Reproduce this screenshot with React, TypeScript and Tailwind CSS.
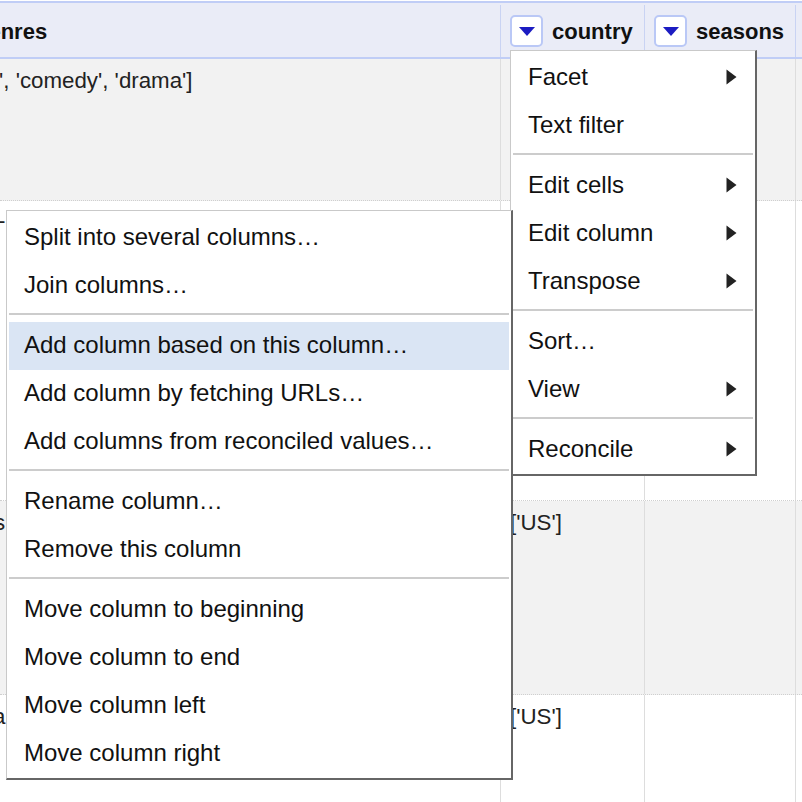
type Entry = { label: string; sub?: boolean; active?: boolean } | "sep";

const columnMenu: Entry[] = [
  { label: "Facet", sub: true },
  { label: "Text filter" },
  "sep",
  { label: "Edit cells", sub: true },
  { label: "Edit column", sub: true },
  { label: "Transpose", sub: true },
  "sep",
  { label: "Sort…" },
  { label: "View", sub: true },
  "sep",
  { label: "Reconcile", sub: true },
];

const editColumnMenu: Entry[] = [
  { label: "Split into several columns…" },
  { label: "Join columns…" },
  "sep",
  { label: "Add column based on this column…", active: true },
  { label: "Add column by fetching URLs…" },
  { label: "Add columns from reconciled values…" },
  "sep",
  { label: "Rename column…" },
  { label: "Remove this column" },
  "sep",
  { label: "Move column to beginning" },
  { label: "Move column to end" },
  { label: "Move column left" },
  { label: "Move column right" },
];

const rows = [
  { h: "h-[142px]", bg: "bg-[#f2f2f2]", pad: "pt-[5px]", genres: "', 'comedy', 'drama']", shift: "ml-[-1px]", country: "['US']" },
  { h: "h-[300px]", bg: "bg-white", pad: "pt-[3px]", genres: "-', 'drama', 'thriller']", shift: "ml-[-2px]", country: "['US']" },
  { h: "h-[194px]", bg: "bg-[#f2f2f2]", pad: "pt-[5px]", genres: "s', 'drama']", shift: "ml-[-6px]", country: "['US']" },
  { h: "h-[110px]", bg: "bg-white", pad: "pt-[5px]", genres: "a', 'crime']", shift: "ml-[-7px]", country: "['US']" },
];

function DropButton() {
  return (
    <div className="flex h-[32px] w-[33px] shrink-0 items-center justify-center rounded-[5px] border-2 border-[#bac8f6] bg-white">
      <svg width="16" height="9" viewBox="0 0 16 9">
        <polygon points="0,0 16,0 8,9" fill="#1c1cc2" />
      </svg>
    </div>
  );
}

function SubArrow() {
  return (
    <svg width="11" height="16" viewBox="0 0 11 16" className="shrink-0">
      <polygon points="0.5,0.5 10.5,8 0.5,15.5" fill="#222" />
    </svg>
  );
}

function Menu({ items, className }: { items: Entry[]; className: string }) {
  return (
    <div
      className={`absolute border-t border-l border-t-[#c9c9c9] border-l-[#c9c9c9] border-r-2 border-b-2 border-r-[#666] border-b-[#666] bg-white px-[2px] pt-[3px] ${className}`}
    >
      {items.map((it, i) =>
        it === "sep" ? (
          <div key={i} className="mt-[3px] mb-[7px] h-[2px] bg-[#cccccc]" />
        ) : (
          <div
            key={i}
            className={`flex h-[48px] items-center justify-between pb-[2px] pl-[15px] pr-[16px] text-[24px] whitespace-nowrap text-[#111] ${
              it.active ? "bg-[#dae5f4]" : ""
            }`}
          >
            <span>{it.label}</span>
            {it.sub && <SubArrow />}
          </div>
        )
      )}
    </div>
  );
}

export default function App() {
  return (
    <div className="relative h-[802px] w-[802px] overflow-hidden bg-white pt-px font-['Liberation_Sans',Arial,sans-serif]">
      {/* header */}
      <div className="flex h-[58px] border-y-2 border-[#c0cdf6] bg-[#eaecf7] pt-[2px] text-[22px] font-bold text-[#111]">
        <div className="flex w-[501px] shrink-0 items-center overflow-hidden border-r border-[#c9d3f3]">
          <span className="ml-[-25px] whitespace-nowrap">genres</span>
        </div>
        <div className="flex w-[144px] shrink-0 items-center gap-[9px] border-r border-[#c9d3f3] pl-[9px]">
          <DropButton />
          <span>country</span>
        </div>
        <div className="flex w-[151px] shrink-0 items-center gap-[9px] border-r border-[#c9d3f3] pl-[9px]">
          <DropButton />
          <span>seasons</span>
        </div>
        <div className="flex-1" />
      </div>

      {/* rows */}
      {rows.map((r, i) => (
        <div
          key={i}
          className={`flex ${r.h} ${r.bg} border-b border-dotted border-[#cfcfcf] text-[22.3px] text-[#222]`}
        >
          <div className={`w-[501px] shrink-0 overflow-hidden border-r border-[#dddddd] ${r.pad}`}>
            <div className={`whitespace-nowrap ${r.shift}`}>{r.genres}</div>
          </div>
          <div className="w-[144px] shrink-0 border-r border-[#dddddd] pt-[5px] pl-[9px]">
            {r.country}
          </div>
          <div className="w-[151px] shrink-0 border-r border-[#dddddd]" />
          <div className="flex-1" />
        </div>
      ))}

      {/* column dropdown menu */}
      <Menu items={columnMenu} className="left-[510px] top-[50px] w-[247px] z-10" />
      {/* edit column submenu */}
      <Menu items={editColumnMenu} className="left-[6px] top-[210px] w-[507px] z-20" />
    </div>
  );
}
